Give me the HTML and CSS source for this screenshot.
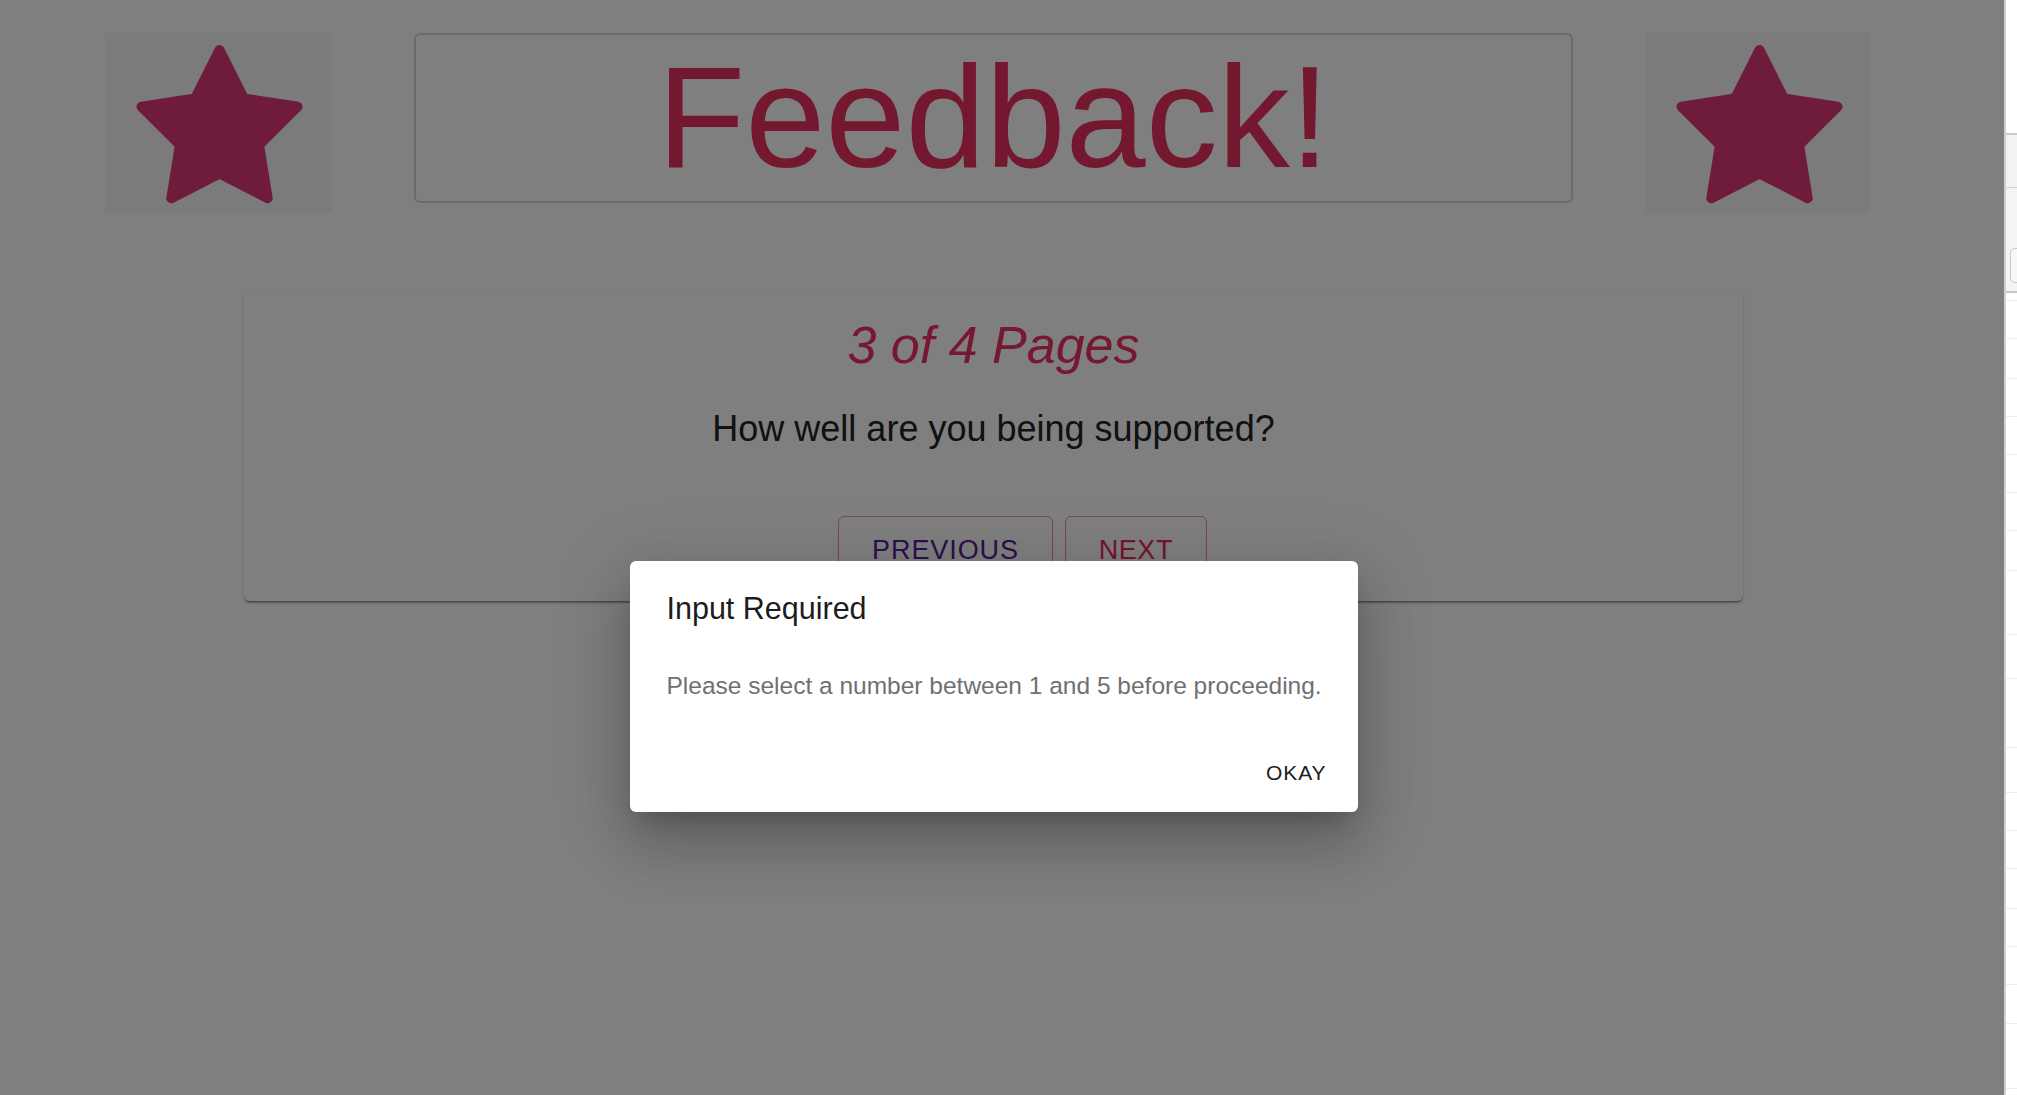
FILE: index.html
```html
<!DOCTYPE html>
<html lang="en">
<head>
<meta charset="utf-8">
<title>Feedback</title>
<link rel="stylesheet" href="styles.css">
</head>
<body>
<div class="app">
  <div class="page">
    <header class="header">
      <div class="star-box">
        <svg class="star" viewBox="-1 -1 169 162" width="169" height="162" aria-hidden="true">
          <polygon points="84.5,7 108.9,55.5 162.5,63.7 124,101.9 132.7,155.2 84.5,130.5 36.3,155.2 45,101.9 6.5,63.7 60.1,55.5" />
        </svg>
      </div>
      <div class="title-box"><h1 class="title">Feedback!</h1></div>
      <div class="star-box right">
        <svg class="star" viewBox="-1 -1 169 162" width="169" height="162" aria-hidden="true">
          <polygon points="84.5,7 108.9,55.5 162.5,63.7 124,101.9 132.7,155.2 84.5,130.5 36.3,155.2 45,101.9 6.5,63.7 60.1,55.5" />
        </svg>
      </div>
    </header>

    <main class="card">
      <h2 class="pages">3 of 4 Pages</h2>
      <p class="question">How well are you being supported?</p>
      <div class="nav">
        <button class="btn btn-prev">PREVIOUS</button>
        <button class="btn btn-next">NEXT</button>
      </div>
    </main>
  </div>

  <div class="backdrop"></div>

  <div class="dialog-layer">
    <div class="dialog" role="dialog">
      <h3 class="dialog-title">Input Required</h3>
      <p class="dialog-text">Please select a number between 1 and 5 before proceeding.</p>
      <div class="dialog-actions">
        <button class="okay">OKAY</button>
      </div>
    </div>
  </div>
</div>

<aside class="side">
  <div class="s-top"></div>
  <div class="s-head"></div>
  <div class="s-tool"><div class="s-field"></div></div>
  <div class="s-row h8"></div>
  <div class="s-row h38"></div>
  <div class="s-row h40"></div>
  <div class="s-row h38"></div>
  <div class="s-row h38"></div>
  <div class="s-row h38"></div>
  <div class="s-row h38"></div>
  <div class="s-row h40"></div>
  <div class="s-row h64"></div>
  <div class="s-row h44"></div>
  <div class="s-row h69"></div>
  <div class="s-row h45"></div>
  <div class="s-row h38"></div>
  <div class="s-row h38"></div>
  <div class="s-row h40"></div>
  <div class="s-row h38"></div>
  <div class="s-row h38"></div>
  <div class="s-row h39"></div>
  <div class="s-row h65"></div>
</aside>
</body>
</html>
```

FILE: styles.css
```css
* { box-sizing: border-box; }

html, body {
  margin: 0;
  padding: 0;
  height: 100%;
}

body {
  display: flex;
  width: 2017px;
  height: 1095px;
  overflow: hidden;
  background: #ffffff;
  font-family: "Liberation Sans", Arial, Helvetica, sans-serif;
  color: #212121;
}

.app {
  position: relative;
  width: 2004px;
  height: 1095px;
  flex: none;
  background: #ffffff;
}

.page {
  padding-right: 17px;
  height: 100%;
}

/* header */
.header {
  display: flex;
  align-items: flex-start;
  padding: 33px 0 0 105px;
}

.star-box {
  width: 227px;
  height: 180px;
  background: #f6f6f6;
  display: flex;
  align-items: center;
  justify-content: center;
  flex: none;
}

.star-box.right {
  width: 224px;
  margin-left: 73px;
}

.star {
  display: block;
  overflow: visible;
}

.star polygon {
  fill: #de3678;
  stroke: #de3678;
  stroke-width: 10;
  stroke-linejoin: round;
}

.title-box {
  width: 1159px;
  height: 170px;
  margin-left: 82px;
  border: 2px solid #d6d6d6;
  border-radius: 6px;
  flex: none;
  display: flex;
  justify-content: center;
}

.title {
  margin: 0;
  font-size: 144px;
  font-weight: 400;
  line-height: normal;
  color: #e8305e;
  letter-spacing: 0;
}

/* card */
.card {
  width: 1499px;
  margin: 78px auto 0;
  padding: 23px 24px 16px;
  background: #ffffff;
  border-radius: 6px;
  box-shadow: 0 3px 2px -2px rgba(0,0,0,0.35), 0 1.5px 1.5px 0 rgba(0,0,0,0.14), 0 1.5px 4.5px 0 rgba(0,0,0,0.12);
  text-align: center;
}

.pages {
  margin: 0;
  font-size: 52px;
  line-height: 63px;
  font-style: italic;
  font-weight: 400;
  color: #ec3062;
}

.question {
  margin: 28px 0 0;
  font-size: 36px;
  line-height: 48px;
  color: #222222;
}

.nav {
  display: flex;
  justify-content: center;
  gap: 12px;
  margin-top: 63px;
  padding-left: 58px;
}

.btn {
  font-family: "Liberation Sans", Arial, Helvetica, sans-serif;
  font-size: 27px;
  letter-spacing: 0.9px;
  line-height: 45px;
  padding: 11px 33px;
  background: transparent;
  border: 1.5px solid rgba(232, 48, 94, 0.55);
  border-radius: 6px;
}

.btn-prev { color: #5a1e9c; }
.btn-next { color: #ec2a5c; letter-spacing: 0.5px; }

/* backdrop + dialog */
.backdrop {
  position: absolute;
  inset: 0;
  background: rgba(0, 0, 0, 0.5);
}

.dialog-layer {
  position: absolute;
  inset: 0;
  display: flex;
  justify-content: center;
  align-items: flex-start;
  padding: 561px 17px 0 0;
}

.dialog {
  width: 728px;
  height: 251px;
  background: #ffffff;
  border-radius: 6px;
  padding: 23px 0 20px;
  box-shadow: 0 16px 22px -10px rgba(0,0,0,0.2), 0 36px 57px 4px rgba(0,0,0,0.14), 0 14px 69px 12px rgba(0,0,0,0.12);
}

.dialog-title {
  margin: 0;
  padding: 0 36px 0 37px;
  font-size: 30.5px;
  line-height: 48px;
  font-weight: 400;
  color: #1c1c1c;
}

.dialog-text {
  margin: 36px 0 0;
  padding: 0 30px 0 37px;
  font-size: 24.5px;
  line-height: 36px;
  color: #707070;
}

.dialog-actions {
  display: flex;
  justify-content: flex-end;
  margin-top: 51px;
  padding: 0 31px;
}

.okay {
  font-family: "Liberation Sans", Arial, Helvetica, sans-serif;
  font-size: 21px;
  line-height: 36px;
  padding: 0;
  border: 0;
  background: transparent;
  color: #1c1c1c;
  letter-spacing: 0.9px;
}

/* right side panel */
.side {
  width: 13px;
  flex: none;
  height: 1095px;
  border-left: 2px solid #cfcfd1;
  background: #ffffff;
  overflow: hidden;
}

.s-top { height: 133px; }

.s-head {
  height: 55px;
  background: #f1f2f4;
  border-top: 2px solid #c9cbcf;
  border-bottom: 1px solid #d2d4d8;
}

.s-tool {
  height: 105px;
  background: #f3f4f6;
  border-bottom: 2px solid #c4c6ca;
  padding: 60px 0 0 4px;
}

.s-field {
  height: 35px;
  width: 20px;
  border: 1.5px solid #c6c8cc;
  border-radius: 5px;
  background: #f8f8f9;
}

.s-row { border-bottom: 1px solid #ececee; }
.h8 { height: 8px; }
.h38 { height: 38px; }
.h39 { height: 39px; }
.h40 { height: 40px; }
.h44 { height: 44px; }
.h45 { height: 45px; }
.h64 { height: 64px; }
.h65 { height: 65px; }
.h69 { height: 69px; }
```
